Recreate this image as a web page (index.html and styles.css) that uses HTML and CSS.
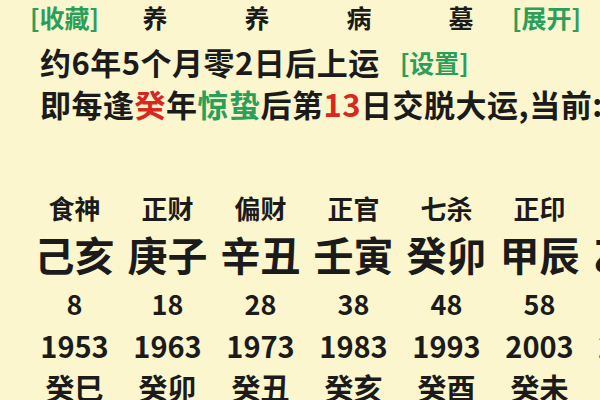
FILE: index.html
```html
<!DOCTYPE html>
<html lang="zh">
<head>
<meta charset="utf-8">
<link rel="stylesheet" href="styles.css">
</head>
<body>
<div class="page">
  <div class="top">
    <span class="link">[收藏]</span>
    <span class="stage">养</span>
    <span class="stage">养</span>
    <span class="stage">病</span>
    <span class="stage">墓</span>
    <span class="link">[展开]</span>
  </div>
  <div class="line l2">约6年5个月零2日后上运<span class="link set">[设置]</span></div>
  <div class="line l3">即每逢<span class="red">癸</span>年<span class="green">惊蛰</span>后第<span class="red">13</span>日交脱大运,当前:</div>

  <div class="grid">
    <div class="col"><div class="god">食神</div><div class="gz">己亥</div><div class="age">8</div><div class="year">1953</div><div class="ln">癸巳</div></div>
    <div class="col"><div class="god">正财</div><div class="gz">庚子</div><div class="age">18</div><div class="year">1963</div><div class="ln">癸卯</div></div>
    <div class="col"><div class="god">偏财</div><div class="gz">辛丑</div><div class="age">28</div><div class="year">1973</div><div class="ln">癸丑</div></div>
    <div class="col"><div class="god">正官</div><div class="gz">壬寅</div><div class="age">38</div><div class="year">1983</div><div class="ln">癸亥</div></div>
    <div class="col"><div class="god">七杀</div><div class="gz">癸卯</div><div class="age">48</div><div class="year">1993</div><div class="ln">癸酉</div></div>
    <div class="col"><div class="god">正印</div><div class="gz">甲辰</div><div class="age">58</div><div class="year">2003</div><div class="ln">癸未</div></div>
    <div class="col"><div class="god">伤官</div><div class="gz">乙巳</div><div class="age">68</div><div class="year">2013</div><div class="ln">癸巳</div></div>
  </div>
</div>
</body>
</html>
```

FILE: styles.css
```css
html, body {
  margin: 0;
  padding: 0;
  background: #fbf6cd;
}
body {
  width: 600px;
  height: 400px;
  overflow: hidden;
  font-family: "Noto Sans CJK SC", "Noto Sans", sans-serif;
  color: #1b1b1b;
}
.page {
  width: 600px;
}
.top {
  display: grid;
  grid-template-columns: 74px repeat(4, 102px) auto;
  padding-left: 30px;
  height: 34px;
  line-height: 34px;
  align-items: center;
}
.stage {
  text-align: center;
  font-size: 25px;
  font-weight: 700;
}
.link {
  color: #2a9f5a;
  font-size: 25px;
  font-weight: 600;
  white-space: nowrap;
}
.line {
  padding-left: 40px;
  font-size: 31px;
  font-weight: 700;
  height: 42px;
  line-height: 42px;
  white-space: nowrap;
  letter-spacing: 0.5px;
}
.l2 {
  margin-top: 7px;
}
.set {
  margin-left: 20px;
  letter-spacing: 0;
  vertical-align: top;
}
.red { color: #d6281f; }
.green { color: #2a9f5a; }
.grid {
  margin-top: 64px;
  margin-left: 28px;
  display: grid;
  grid-template-columns: repeat(7, 93px);
  width: 651px;
}
.col {
  text-align: center;
  white-space: nowrap;
}
.god {
  font-size: 26px;
  font-weight: 600;
  height: 38px;
  line-height: 38px;
}
.gz {
  font-size: 40px;
  font-weight: 700;
  height: 54px;
  line-height: 54px;
}
.age {
  font-size: 27px;
  font-weight: 600;
  height: 46px;
  line-height: 46px;
}
.year {
  font-size: 29px;
  font-weight: 600;
  height: 36px;
  line-height: 36px;
}
.ln {
  font-size: 29px;
  font-weight: 600;
  height: 48px;
  line-height: 48px;
}
```
